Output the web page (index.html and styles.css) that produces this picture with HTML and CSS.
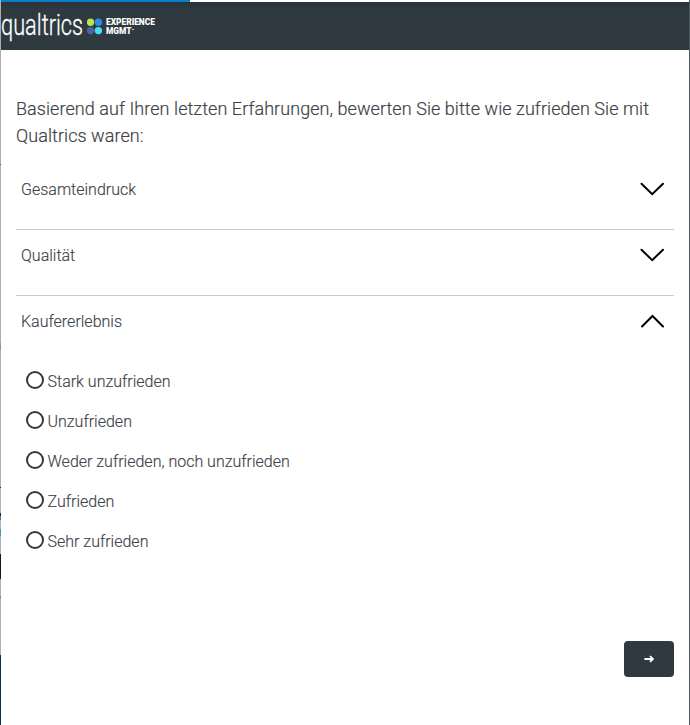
FILE: index.html
```
<!DOCTYPE html>
<html lang="de">
<head>
  <meta charset="UTF-8">
  <title>Qualtrics Umfrage</title>
  <meta name="viewport" content="width=device-width, initial-scale=1.0">
  <link rel="stylesheet" href="styles.css">
</head>
<body>
  <div class="survey">
    <div class="progress"><div class="progress-bar"></div></div>
    <header class="header">
      <span class="logo-name"><span class="logo-word">qualtrics</span></span>
      <svg class="logo-dots" width="16" height="18" viewBox="0 0 16 18">
        <circle cx="3.5" cy="4.2" r="3.7" fill="#b4e84c"/>
        <circle cx="11.4" cy="4.2" r="3.7" fill="#2f8ce0"/>
        <circle cx="3.5" cy="12.6" r="3.7" fill="#4e62a3"/>
        <circle cx="11.4" cy="12.6" r="3.7" fill="#46e0f0"/>
      </svg>
      <span class="logo-tag">EXPERIENCE<br>MGMT<sup>™</sup></span>
    </header>
    <main>
      <h1 class="question">Basierend auf Ihren letzten Erfahrungen, bewerten Sie bitte wie zufrieden Sie mit Qualtrics waren:</h1>
      <div class="accordion">
        <section class="item">
          <div class="item-head">
            <span>Gesamteindruck</span>
            <svg class="chevron" width="26" height="16" viewBox="0 0 26 16"><path d="M2.5 2.7 13.2 13.2 24 2.7"/></svg>
          </div>
        </section>
        <section class="item">
          <div class="item-head">
            <span>Qualität</span>
            <svg class="chevron" width="26" height="16" viewBox="0 0 26 16"><path d="M2.5 2.7 13.2 13.2 24 2.7"/></svg>
          </div>
        </section>
        <section class="item">
          <div class="item-head">
            <span>Kaufererlebnis</span>
            <svg class="chevron" width="26" height="16" viewBox="0 0 26 16"><path d="M3 13.5 13.5 3 24 13.5"/></svg>
          </div>
          <div class="choices">
            <label class="choice"><input type="radio" name="kauf">Stark unzufrieden</label>
            <label class="choice"><input type="radio" name="kauf">Unzufrieden</label>
            <label class="choice"><input type="radio" name="kauf">Weder zufrieden, noch unzufrieden</label>
            <label class="choice"><input type="radio" name="kauf">Zufrieden</label>
            <label class="choice"><input type="radio" name="kauf">Sehr zufrieden</label>
          </div>
        </section>
      </div>
      <div class="buttons">
        <button type="button" class="next" aria-label="Weiter">
          <svg width="10" height="8" viewBox="0 0 10 8"><path d="M.4 4h8.4M6 1.2 8.9 4 6 6.8"/></svg>
        </button>
      </div>
    </main>
  </div>
</body>
</html>
```

FILE: styles.css
```
* {
  box-sizing: border-box;
}
body {
  margin: 0;
  background: #fff;
  color: #414249;
  font-family: Roboto, "Liberation Sans", sans-serif;
  font-weight: 300;
}
.survey {
  height: 725px;
  overflow: hidden;
  border-right: 1px solid #4d5a61;
  padding-left: 1px;
  /* sliver of the page behind the survey panel */
  background: linear-gradient(#adadad 0 164px, #cf3518 164px 165px, #adadad 165px 343px, #939393 343px 350px, #b2b2b2 350px 487px, #26292c 487px 488px, #b5b5b5 488px 513px, #10233a 513px 516px, #2f83b5 516px 520px, #b5b5b5 520px 529px, #4e91bd 529px 536px, #b2b2b2 536px 554px, #14191e 554px 579px, #b0b0b0 579px 596px, #8c8c8c 596px 599px, #b2b2b2 599px 655px, #0b2a60 655px) no-repeat left top / 1px 100%;
}
.progress {
  height: 2px;
  background: #fff;
}
.progress-bar {
  width: 189px;
  height: 2px;
  background: #0b7cc8;
}
.header {
  display: flex;
  height: 48px;
  background: linear-gradient(#29343a, #2f3a40 8px);
  color: #fff;
}
.logo-name {
  width: 86px;
  height: 48px;
}
.logo-word {
  display: inline-block;
  font-size: 29px;
  line-height: 46px;
  transform: scaleX(0.75);
  transform-origin: left;
  -webkit-text-stroke: 0.3px #fff;
}
.logo-dots {
  margin-top: 16px;
}
.logo-tag {
  margin: 16px 0 0 3px;
  font-size: 8.4px;
  font-weight: 900;
  line-height: 9px;
}
.logo-tag sup {
  font-size: 4px;
  line-height: 0;
  vertical-align: 2px;
}
main {
  padding: 45px 15px 0;
}
.question {
  margin: 0;
  font-size: 18px;
  font-weight: 300;
  line-height: 27px;
  letter-spacing: 0.065px;
  -webkit-text-stroke: 0.2px;
}
.accordion {
  padding-top: 15px;
  -webkit-text-stroke: 0.15px;
}
.item {
  height: 66px;
  border-bottom: 1px solid #c9c9c9;
}
.item:last-child {
  height: 281px;
  border-bottom: 0;
}
.item-head {
  display: flex;
  justify-content: space-between;
  align-items: center;
  height: 50px;
  padding: 0 9px 0 5px;
  font-size: 16px;
}
.chevron {
  fill: none;
  stroke: #000;
  stroke-width: 2;
  stroke-linecap: round;
}
.choices {
  padding: 15px 0 0 9.5px;
}
.choice {
  display: flex;
  align-items: center;
  height: 40px;
  font-size: 16px;
}
.choice input {
  appearance: none;
  width: 18px;
  height: 18px;
  margin: 0 4px 2px 0;
  border: 2px solid #2f3a40;
  border-radius: 50%;
}
.buttons {
  display: flex;
  justify-content: flex-end;
  padding-top: 64px;
}
.next {
  display: flex;
  align-items: center;
  justify-content: center;
  width: 50px;
  height: 36px;
  border: 0;
  border-radius: 4px;
  background: #2f3a40;
}
.next path {
  fill: none;
  stroke: #fff;
  stroke-width: 1.8;
}
```
